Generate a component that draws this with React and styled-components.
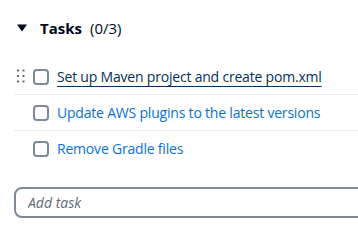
import React from "react";
import styled, { createGlobalStyle } from "styled-components";

const Global = createGlobalStyle`
  html, body { margin: 0; padding: 0; background: #ffffff; overflow: hidden; }
  body { font-family: "Open Sans", "Noto Sans", Arial, sans-serif; color: #000716; }
`;

const Page = styled.div`
  width: 358px;
  overflow: hidden;
  padding: 17px 0 0 14px;
  box-sizing: border-box;
  display: flex;
  flex-direction: column;
`;

const Header = styled.div`
  display: flex;
  align-items: center;
  height: 22px;
  padding-left: 3px;
  gap: 13px;
`;

const Title = styled.h2`
  margin: 0;
  font-size: 15px;
  line-height: 22px;
  font-weight: 700;
  color: #000716;
  display: flex;
  gap: 8px;
`;

const Count = styled.span`
  font-weight: 400;
`;

const List = styled.ul`
  list-style: none;
  margin: 20px 0 0 0;
  padding: 0;
  display: flex;
  flex-direction: column;
`;

const Item = styled.li`
  display: flex;
  align-items: center;
  height: 35px;
  border-bottom: ${(p) => (p.$last ? "none" : "1px solid #e9ebed")};
  padding-left: 3px;
`;

const HandleSlot = styled.span`
  width: 10px;
  height: 16px;
  display: flex;
  align-items: center;
  margin-right: 6px;
`;

const Box = styled.span`
  width: 12px;
  height: 12px;
  border: 2px solid #7d8998;
  border-radius: 4px;
  background: #fff;
  flex: none;
  margin-right: 8px;
`;

const Link = styled.a`
  font-size: 14px;
  line-height: 20px;
  letter-spacing: -0.2px;
  color: ${(p) => (p.$hover ? "#033160" : "#0972d3")};
  text-decoration: ${(p) => (p.$hover ? "underline" : "none")};
  text-decoration-thickness: 1px;
  text-underline-offset: 4px;
  white-space: nowrap;
  cursor: pointer;
`;

const Input = styled.input`
  margin-top: 21px;
  box-sizing: border-box;
  width: calc(100% + 12px);
  height: 31px;
  border: 2px solid #7d8998;
  border-radius: 8px;
  padding: 0 12px;
  font-family: inherit;
  font-size: 14px;
  color: #000716;
  outline: none;
  &::placeholder {
    color: #5f6b7a;
    font-style: italic;
  }
`;

const Caret = () => (
  <svg width="10" height="8" viewBox="0 0 10 8">
    <path d="M0 0.5 H10 L5 7.5 Z" fill="#000716" />
  </svg>
);

const Handle = () => (
  <svg width="10" height="16" viewBox="0 0 10 16">
    {[1.5, 7, 12.5].map((y) =>
      [1, 6.5].map((x) => (
        <rect key={`${x}-${y}`} x={x - 1} y={y - 1} width="2" height="2" fill="#5f6b7a" />
      ))
    )}
  </svg>
);

const tasks = [
  "Set up Maven project and create pom.xml",
  "Update AWS plugins to the latest versions",
  "Remove Gradle files",
];

export default function App() {
  return (
    <>
      <Global />
      <Page>
        <Header>
          <Caret />
          <Title>
            Tasks <Count>(0/3)</Count>
          </Title>
        </Header>
        <List>
          {tasks.map((t, i) => (
            <Item key={t} $last={i === tasks.length - 1}>
              <HandleSlot>{i === 0 && <Handle />}</HandleSlot>
              <Box />
              <Link $hover={i === 0}>{t}</Link>
            </Item>
          ))}
        </List>
        <Input placeholder="Add task" />
      </Page>
    </>
  );
}
